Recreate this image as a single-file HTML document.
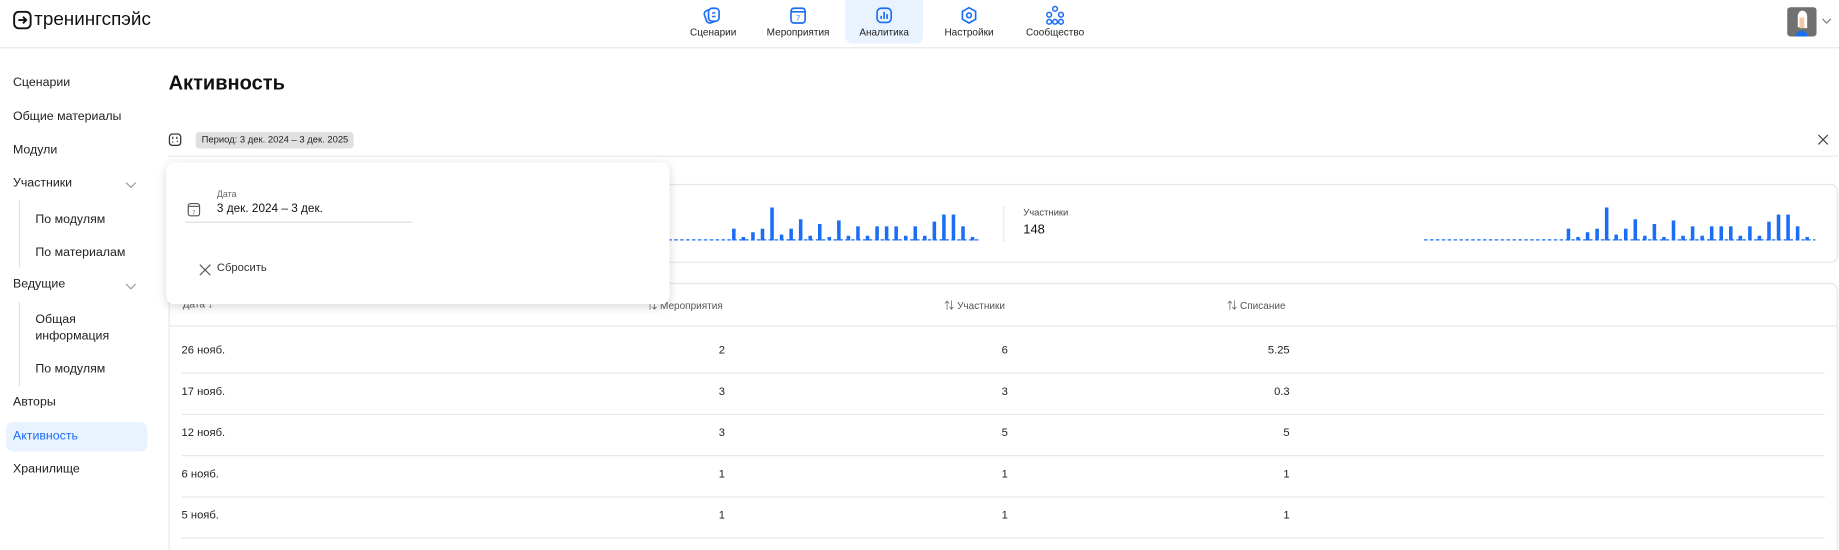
<!DOCTYPE html>
<html><head><meta charset="utf-8">
<style>
html,body{margin:0;padding:0;width:1839px;height:550px;overflow:hidden;background:#fff}
#w{position:absolute;left:0;top:0;width:1560px;height:466.5px;overflow:hidden;transform:scale(1.17885);transform-origin:0 0;font-family:"Liberation Sans","Noto Sans CJK SC",sans-serif;color:#1a1a1a}
.a{position:absolute;white-space:nowrap}
.sb{font-size:10.5px;color:#222}
.nav{font-size:8.5px;color:#222;text-align:center;width:70px}
.th{font-size:8.5px;color:#555}
.td{font-size:9.5px;color:#222}
.hl{position:absolute;height:1px;background:#e8e8e8}
</style></head><body><div id="w">
<svg class="a" style="left:11px;top:9px" width="16" height="16" viewBox="0 0 16 16"><rect x="1" y="1" width="14" height="14" rx="4" fill="none" stroke="#111" stroke-width="1.6"/><path d="M4.5 8h6.5M8.5 5.2L11.2 8 8.5 10.8" fill="none" stroke="#111" stroke-width="1.6"/></svg>
<div class="a" style="left:29px;top:8px;font-size:16px;color:#111">тренингспэйс</div>
<div class="a" style="left:717px;top:0;width:66px;height:37px;background:#e9f3ff;border-radius:0 0 6px 6px"></div>
<svg class="a" style="left:596px;top:5px" width="16" height="16" viewBox="0 0 16 16"><rect x="2" y="3" width="10" height="11" rx="3" transform="rotate(-20 7 8)" fill="none" stroke="#1a6ef5" stroke-width="1.4"/><rect x="5" y="2" width="9" height="11" rx="3" fill="#fff" stroke="#1a6ef5" stroke-width="1.4"/><path d="M8 6h3M8 9h3" stroke="#1a6ef5" stroke-width="1.2"/></svg>
<svg class="a" style="left:669px;top:5px" width="16" height="16" viewBox="0 0 16 16"><rect x="2" y="2" width="12" height="12.5" rx="2.5" fill="none" stroke="#1a6ef5" stroke-width="1.4"/><path d="M2 5h12" stroke="#1a6ef5" stroke-width="1.4"/><text x="8" y="12.5" font-size="6.5" text-anchor="middle" fill="#1a6ef5" font-family="Liberation Sans">7</text></svg>
<svg class="a" style="left:742px;top:5px" width="16" height="16" viewBox="0 0 16 16"><rect x="2" y="2" width="12" height="12" rx="3.5" fill="none" stroke="#1a6ef5" stroke-width="1.4"/><path d="M5.5 11V8.5M8 11V5M10.5 11V7" stroke="#1a6ef5" stroke-width="1.4"/></svg>
<svg class="a" style="left:814px;top:5px" width="16" height="16" viewBox="0 0 16 16"><path d="M8 1.5l5.6 3.2v6.6L8 14.5 2.4 11.3V4.7z" fill="none" stroke="#1a6ef5" stroke-width="1.4"/><circle cx="8" cy="8" r="2" fill="none" stroke="#1a6ef5" stroke-width="1.4"/></svg>
<svg class="a" style="left:886px;top:4px" width="18" height="18" viewBox="0 0 18 18"><g fill="none" stroke="#1a6ef5" stroke-width="1.3"><circle cx="9" cy="3.5" r="2"/><circle cx="4" cy="8.5" r="2"/><circle cx="14" cy="8.5" r="2"/><circle cx="4" cy="14.5" r="2"/><circle cx="9" cy="14.5" r="2"/><circle cx="14" cy="14.5" r="2"/></g></svg>
<div class="a nav" style="left:570px;top:22px">Сценарии</div>
<div class="a nav" style="left:642px;top:22px">Мероприятия</div>
<div class="a nav" style="left:715px;top:22px">Аналитика</div>
<div class="a nav" style="left:787px;top:22px">Настройки</div>
<div class="a nav" style="left:860px;top:22px">Сообщество</div>
<svg class="a" style="left:1516px;top:6px" width="25" height="25" viewBox="0 0 25 25"><rect width="25" height="25" rx="3" fill="#707070"/><path d="M7 25c1-4 4-5 5.5-5s4.5 1 5.5 5z" fill="#1a6ef5"/><path d="M9 17V8c0-3 2-5 4-5s4 2 4 5v10" fill="#fff"/><path d="M10.5 9h4v9h-4z" fill="#f1c7a6"/></svg>
<svg class="a" style="left:1545px;top:15px" width="9" height="6" viewBox="0 0 9 6"><path d="M1 1l3.5 3.5L8 1" fill="none" stroke="#777" stroke-width="1"/></svg>
<div class="hl" style="left:0;top:40px;width:1560px"></div>
<div class="a sb" style="left:11px;top:64px">Сценарии</div>
<div class="a sb" style="left:11px;top:93px">Общие материалы</div>
<div class="a sb" style="left:11px;top:121px">Модули</div>
<div class="a sb" style="left:11px;top:149px">Участники</div>
<svg class="a" style="left:106px;top:154px" width="10" height="6" viewBox="0 0 10 6"><path d="M1 1l4 4 4-4" fill="none" stroke="#999" stroke-width="1"/></svg>
<div class="a" style="left:16px;top:170px;width:1px;height:57px;background:#e2e2e2"></div>
<div class="a sb" style="left:30px;top:180px">По модулям</div>
<div class="a sb" style="left:30px;top:208px">По материалам</div>
<div class="a sb" style="left:11px;top:235px">Ведущие</div>
<svg class="a" style="left:106px;top:240px" width="10" height="6" viewBox="0 0 10 6"><path d="M1 1l4 4 4-4" fill="none" stroke="#999" stroke-width="1"/></svg>
<div class="a" style="left:16px;top:256px;width:1px;height:72px;background:#e2e2e2"></div>
<div class="a sb" style="left:30px;top:264px;line-height:14px">Общая<br>информация</div>
<div class="a sb" style="left:30px;top:307px">По модулям</div>
<div class="a sb" style="left:11px;top:335px">Авторы</div>
<div class="a" style="left:5px;top:358px;width:120px;height:25px;background:#e9f3ff;border-radius:6px"></div>
<div class="a sb" style="left:11px;top:364px;color:#1a6ef5">Активность</div>
<div class="a sb" style="left:11px;top:392px">Хранилище</div>
<div class="a" style="left:143px;top:61px;font-size:17px;font-weight:bold;color:#111">Активность</div>
<svg class="a" style="left:143px;top:113px" width="11" height="11" viewBox="0 0 11 11"><rect x=".7" y=".7" width="9.6" height="9.6" rx="2.5" fill="none" stroke="#333" stroke-width="1.1"/><path d="M3.5 3v2M3 7.5h1M7 3v2M7 7h1" stroke="#333" stroke-width="1"/></svg>
<div class="a" style="left:166px;top:112px;height:14px;padding:0 5px;background:#e0e0e0;border-radius:3px;font-size:8px;line-height:14px;color:#222">Период: 3 дек. 2024 – 3 дек. 2025</div>
<svg class="a" style="left:1542px;top:114px" width="9" height="9" viewBox="0 0 9 9"><path d="M.5.5l8 8M8.5.5l-8 8" stroke="#444" stroke-width="1"/></svg>
<div class="hl" style="left:143px;top:132px;width:1416px"></div>
<div class="a" style="left:143px;top:156px;width:1414px;height:65px;border:1px solid #e6e6e6;border-radius:6px"></div>
<div class="a" style="left:851px;top:175px;width:1px;height:30px;background:#e6e6e6"></div>
<div class="a" style="left:868px;top:176px;font-size:8px;color:#444">Участники</div>
<div class="a" style="left:868px;top:189px;font-size:11px;color:#111">148</div>
<svg class="a" style="left:0;top:170px" width="1560" height="40" viewBox="0 170 1560 40" id="ch"></svg>
<div class="a" style="left:143px;top:240px;width:1414px;height:400px;border:1px solid #e6e6e6;border-radius:6px"></div>
<div class="a th" style="left:155px;top:253px">Дата ↓</div>
<div class="a th" style="left:549px;top:253px">⇅ Мероприятия</div>
<div class="a th" style="left:801px;top:253px">⇅ Участники</div>
<div class="a th" style="left:1041px;top:253px">⇅ Списание</div>
<div class="hl" style="left:144px;top:276px;width:1414px"></div>
<div id="rows"></div>
<div class="a" style="left:141px;top:138px;width:427px;height:120px;background:#fff;border-radius:7px;box-shadow:0 2px 8px rgba(0,0,0,.15)"></div>
<div class="a" style="left:184px;top:160px;font-size:7.5px;color:#666">Дата</div>
<svg class="a" style="left:159px;top:172px" width="11" height="12" viewBox="0 0 11 12"><rect x=".7" y=".7" width="9.6" height="10.4" rx="2" fill="none" stroke="#555" stroke-width="1"/><path d="M.7 3h9.6" stroke="#555"/><text x="5.5" y="9.8" font-size="5" text-anchor="middle" fill="#555" font-family="Liberation Sans">7</text></svg>
<div class="a" style="left:184px;top:172px;font-size:10px;color:#111">3 дек. 2024 – 3 дек.</div>
<div class="a" style="left:157px;top:188px;width:193px;height:1px;background:#ddd"></div>
<svg class="a" style="left:169px;top:224px" width="10" height="10" viewBox="0 0 10 10"><path d="M.5.5l9 9M9.5.5l-9 9" stroke="#555" stroke-width="1"/></svg>
<div class="a" style="left:184px;top:222px;font-size:9.5px;color:#333">Сбросить</div>
</div>
<script>
var h=[10,3,7,10,28,5,10,18,4,14,3,17,4,12,4,12,12,12,4,12,4,16,22,22,12,3,12,12];
var s='<g stroke="#1a6ef5" stroke-width="1" stroke-dasharray="3 2"><line x1="372" y1="203.5" x2="830" y2="203.5"/><line x1="1208" y1="203.5" x2="1540" y2="203.5"/></g><g fill="#1a6ef5">';
for(var i=0;i<26;i++){s+='<rect x="'+(621+i*8.1)+'" y="'+(204-h[i])+'" width="3" height="'+h[i]+'"/>';s+='<rect x="'+(1329+i*8.1)+'" y="'+(204-h[i])+'" width="3" height="'+h[i]+'"/>';}
document.getElementById('ch').innerHTML=s+'</g>';
var r=[["26 нояб.","2","6","5.25"],["17 нояб.","3","3","0.3"],["12 нояб.","3","5","5"],["6 нояб.","1","1","1"],["5 нояб.","1","1","1"]];
var o='';
for(var j=0;j<5;j++){var y=292+j*35;
o+='<div class="a td" style="left:154px;top:'+y+'px">'+r[j][0]+'</div>';
o+='<div class="a td" style="left:515px;width:100px;text-align:right;top:'+y+'px">'+r[j][1]+'</div>';
o+='<div class="a td" style="left:755px;width:100px;text-align:right;top:'+y+'px">'+r[j][2]+'</div>';
o+='<div class="a td" style="left:994px;width:100px;text-align:right;top:'+y+'px">'+r[j][3]+'</div>';
o+='<div class="hl" style="left:154px;top:'+(y+24)+'px;width:1394px"></div>';}
document.getElementById('rows').innerHTML=o;
</script>
</body></html>
